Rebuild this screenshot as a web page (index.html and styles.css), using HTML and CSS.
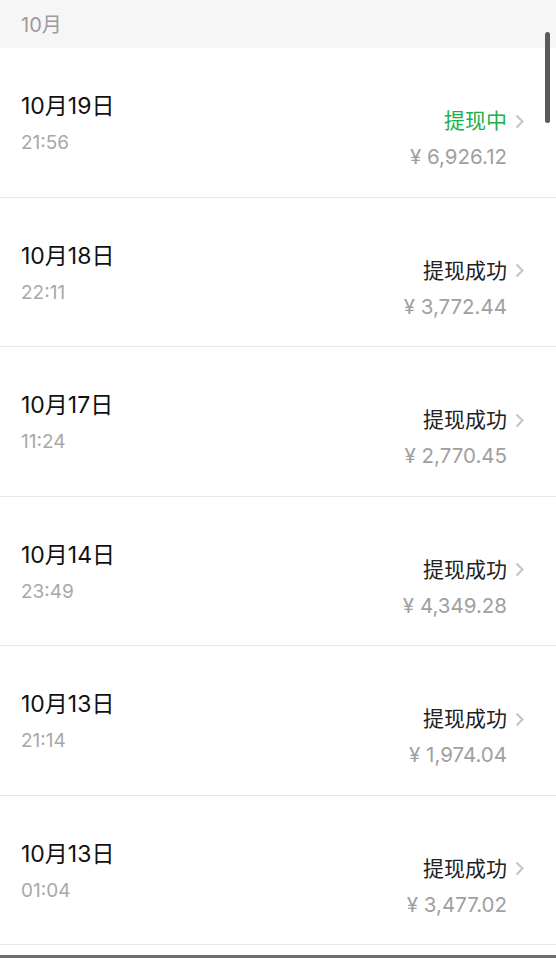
FILE: index.html
```html
<!DOCTYPE html>
<html lang="zh-CN">
<head>
    <meta charset="UTF-8">
    <meta content="width=device-width, initial-scale=1.0" name="viewport">
    <title>提现记录</title>
    <link rel="stylesheet" href="styles.css">
</head>
<body>

<!-- Month heading -->
<div class="month">10月</div>

<!-- Withdraw records -->
<div class="list">
    <div class="record">
        <div class="when">
            <div class="date">10月19日</div>
            <div class="time">21:56</div>
        </div>
        <div class="what">
            <div class="status pending">提现中<svg class="arrow" viewBox="0 0 9 15"><path d="M1.5 1.5 L7.5 7.5 L1.5 13.5"/></svg></div>
            <div class="amount">¥ 6,926.12</div>
        </div>
    </div>
    <div class="record">
        <div class="when">
            <div class="date">10月18日</div>
            <div class="time">22:11</div>
        </div>
        <div class="what">
            <div class="status">提现成功<svg class="arrow" viewBox="0 0 9 15"><path d="M1.5 1.5 L7.5 7.5 L1.5 13.5"/></svg></div>
            <div class="amount">¥ 3,772.44</div>
        </div>
    </div>
    <div class="record">
        <div class="when">
            <div class="date">10月17日</div>
            <div class="time">11:24</div>
        </div>
        <div class="what">
            <div class="status">提现成功<svg class="arrow" viewBox="0 0 9 15"><path d="M1.5 1.5 L7.5 7.5 L1.5 13.5"/></svg></div>
            <div class="amount">¥ 2,770.45</div>
        </div>
    </div>
    <div class="record">
        <div class="when">
            <div class="date">10月14日</div>
            <div class="time">23:49</div>
        </div>
        <div class="what">
            <div class="status">提现成功<svg class="arrow" viewBox="0 0 9 15"><path d="M1.5 1.5 L7.5 7.5 L1.5 13.5"/></svg></div>
            <div class="amount">¥ 4,349.28</div>
        </div>
    </div>
    <div class="record">
        <div class="when">
            <div class="date">10月13日</div>
            <div class="time">21:14</div>
        </div>
        <div class="what">
            <div class="status">提现成功<svg class="arrow" viewBox="0 0 9 15"><path d="M1.5 1.5 L7.5 7.5 L1.5 13.5"/></svg></div>
            <div class="amount">¥ 1,974.04</div>
        </div>
    </div>
    <div class="record">
        <div class="when">
            <div class="date">10月13日</div>
            <div class="time">01:04</div>
        </div>
        <div class="what">
            <div class="status">提现成功<svg class="arrow" viewBox="0 0 9 15"><path d="M1.5 1.5 L7.5 7.5 L1.5 13.5"/></svg></div>
            <div class="amount">¥ 3,477.02</div>
        </div>
    </div>
    <div class="record-next"></div>
</div>

<div class="bottom-bar"></div>

<!-- Scroll indicator -->
<div class="scroller"></div>

</body>
</html>
```

FILE: styles.css
```css
html, body {
    margin: 0;
    height: 958px;
    overflow: hidden;
}
body {
    font-family: Inter, "Noto Sans CJK SC", sans-serif;
    background-color: #fff;
    position: relative;
}
.month {
    height: 48px;
    line-height: 50px;
    padding-left: 21px;
    background-color: #f6f6f6;
    color: #9a9a9a;
    font-size: 20px;
}
.record {
    box-sizing: border-box;
    height: 149.5px;
    border-bottom: 1px solid #e6e6e6;
    display: flex;
    justify-content: space-between;
    padding: 0 32px 0 21px;
}
.when {
    padding-top: 43px;
}
.date {
    font-size: 23px;
    line-height: 30px;
    color: #111;
}
.time {
    margin-top: 9px;
    font-size: 19px;
    line-height: 26px;
    color: #a8a8a8;
}
.what {
    padding-top: 59px;
    display: flex;
    flex-direction: column;
    align-items: flex-end;
}
.status {
    font-size: 21px;
    line-height: 28px;
    color: #222;
    display: flex;
    align-items: center;
}
.status.pending {
    color: #20b04a;
}
.arrow {
    width: 9px;
    height: 15px;
    margin-left: 8px;
    fill: none;
    stroke: #c4c4c4;
    stroke-width: 2;
}
.amount {
    margin-top: 8px;
    margin-right: 17px;
    font-size: 20.5px;
    line-height: 28px;
    color: #a0a0a0;
}
.record-next {
    height: 10px;
}
.bottom-bar {
    height: 3px;
    background-color: #6f6f6f;
}
.scroller {
    position: absolute;
    top: 32px;
    left: 545px;
    width: 5px;
    height: 91px;
    border-radius: 3px;
    background-color: #5a5a5a;
}
```
